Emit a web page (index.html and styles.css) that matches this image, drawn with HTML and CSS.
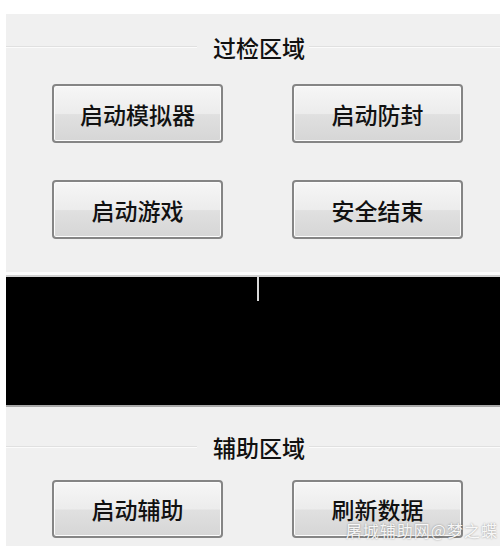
FILE: index.html
```html
<!DOCTYPE html>
<html lang="zh-CN">
<head>
    <meta charset="UTF-8">
    <meta name="viewport" content="width=device-width, initial-scale=1.0">
    <title>过检区域</title>
    <link rel="stylesheet" href="styles.css">
</head>
<body>
    <div class="panel">
        <div class="group">
            <div class="legend"><span>过检区域</span></div>
            <div class="buttons">
                <button class="btn">启动模拟器</button>
                <button class="btn">启动防封</button>
                <button class="btn">启动游戏</button>
                <button class="btn">安全结束</button>
            </div>
        </div>

        <div class="console">
            <div class="caret"></div>
        </div>

        <div class="group group-bottom">
            <div class="legend"><span>辅助区域</span></div>
            <div class="buttons">
                <button class="btn short">启动辅助</button>
                <button class="btn short">刷新数据</button>
            </div>
        </div>

        <div class="watermark">屠城辅助网@梦之蝶</div>
    </div>
</body>
</html>
```

FILE: styles.css
```css
body {
    margin: 0;
    background: #fff;
    font-family: "Noto Sans CJK SC", "Microsoft YaHei", sans-serif;
    height: 546px;
    overflow: hidden;
}
.panel {
    position: relative;
    margin: 14px 0 0 6px;
    background: #f0f0f0;
    height: 532px;
}
.group {
    padding-top: 19px;
}
.legend {
    display: flex;
    align-items: center;
    height: 28px;
}
.legend::before,
.legend::after {
    content: "";
    flex: 1;
    border-top: 1px solid #e0e0e0;
    border-bottom: 1px solid #fbfbfb;
}
.legend span {
    padding: 0 4px 0 6px;
    font-size: 23px;
    font-weight: 500;
    line-height: 28px;
    color: #111;
    margin-left: 10px;
}
.buttons {
    display: grid;
    grid-template-columns: 171px 171px;
    column-gap: 69px;
    row-gap: 37px;
    padding-left: 46px;
    margin-top: 23px;
}
.btn {
    height: 59px;
    font-family: inherit;
    font-size: 23px;
    font-weight: 500;
    color: #111;
    border: 2px solid #858585;
    border-radius: 4px;
    background: linear-gradient(#f6f6f6, #ececec 50%, #e0e0e0 52%, #d6d6d6);
    box-shadow: inset 0 0 0 1px #fcfcfc;
    padding: 0;
    cursor: pointer;
}
.btn.short {
    height: 58px;
}
.console {
    position: relative;
    margin-top: 36px;
    height: 128px;
    background: #000;
    border-top: 2px solid #d2d2d2;
    border-bottom: 2px solid #a8a8a8;
    box-shadow: 0 -3px 0 #fdfdfd;
}
.caret {
    position: absolute;
    left: 251px;
    top: 0;
    width: 2px;
    height: 24px;
    background: #d8d8d8;
}
.group-bottom {
    padding-top: 26px;
}
.group-bottom .buttons {
    margin-top: 19px;
}
.watermark {
    position: absolute;
    right: 2px;
    bottom: 4px;
    font-size: 16px;
    letter-spacing: 1px;
    color: rgba(255, 255, 255, 0.92);
    text-shadow: 0 0 2px rgba(0, 0, 0, 0.4);
}
```
